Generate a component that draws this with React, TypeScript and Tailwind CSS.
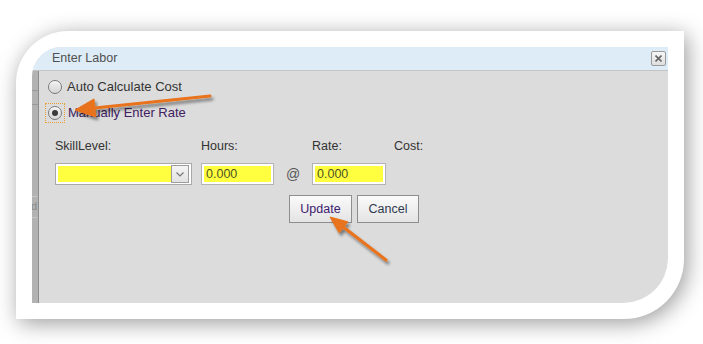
import React from "react";

const font = { fontFamily: '"Liberation Sans", Arial, sans-serif' };

function Radio({ checked }: { checked?: boolean }) {
  return (
    <div className="w-[14px] h-[14px] rounded-full border border-[#7a7a7a] bg-gradient-to-b from-[#f2f2f2] to-[#d6d6d6] flex items-center justify-center shadow-[inset_0_1px_1px_rgba(255,255,255,0.8)]">
      {checked && <div className="w-[6px] h-[6px] rounded-full bg-[#3a3a3a]" />}
    </div>
  );
}

function YellowInput({ value, w }: { value: string; w: string }) {
  return (
    <div className={`${w} h-[22px] border border-[#b3b3b3] bg-white p-[2px]`}>
      <div className="h-full bg-[#ffff40] flex items-center pl-[2px] text-[12.5px] text-[#4c5220]">{value}</div>
    </div>
  );
}

export default function App() {
  return (
    <div className="w-[703px] h-[344px] bg-white overflow-hidden pt-[31px] pl-[16px]" style={font}>
      <div className="w-[668px] h-[288px] bg-white rounded-tl-[52px] rounded-br-[60px] shadow-[3px_4px_22px_rgba(0,0,0,0.4)] p-[16px] relative">
        <div className="w-full h-full rounded-tl-[30px] rounded-br-[45px] overflow-hidden bg-[#dcdcdc] flex flex-col">
          {/* title bar */}
          <div className="h-[24px] bg-[#deecf7] border-b border-[#c4c4c4] flex items-center justify-between pl-[20px] pr-[2px] shrink-0">
            <span className="text-[12.5px] text-[#505050]">Enter Labor</span>
            <div className="w-[15px] h-[15px] border border-[#9a9a9a] rounded-[2px] bg-gradient-to-b from-[#f6f6f6] to-[#dedede] flex items-center justify-center">
              <svg width="7" height="7" viewBox="0 0 7 7">
                <path d="M0.5 0.5 L6.5 6.5 M6.5 0.5 L0.5 6.5" stroke="#666" strokeWidth="1.6" />
              </svg>
            </div>
          </div>
          <div className="flex flex-1">
            {/* left page strip */}
            <div className="w-[7px] bg-[#b2b2b2] border-r border-[#8c8c8c] relative shrink-0">
              <div className="absolute left-0 right-0 top-[19px] h-px bg-[#9a9a9a]" />
              <div className="absolute left-0 right-0 top-[33px] h-px bg-[#9a9a9a]" />
              <div className="absolute left-0 right-0 top-[125px] h-px bg-[#c4c4c4]" />
              <div className="absolute left-0 right-0 top-[146px] h-px bg-[#c4c4c4]" />
              <span className="absolute left-[-1px] top-[128px] text-[11px] text-[#8a8a8a] leading-[14px]">d</span>
            </div>
            {/* content */}
            <div className="flex-1 flex flex-col pt-[8px]">
              <div className="flex items-center h-[16px] pl-[9px]">
                <Radio />
                <span className="ml-[5px] text-[13px] text-[#333]">Auto Calculate Cost</span>
              </div>
              <div className="flex items-center h-[16px] mt-[10px] pl-[6px]">
                <div className="p-[2px] border border-dotted border-[#e8a030]">
                  <Radio checked />
                </div>
                <span className="ml-[3px] text-[13px] text-[#40215e]">Manually Enter Rate</span>
              </div>
              <div className="flex mt-[18px] pl-[16px] text-[12.5px] text-[#333] leading-[14px]">
                <span className="w-[146px]">SkillLevel:</span>
                <span className="w-[111px]">Hours:</span>
                <span className="w-[82px]">Rate:</span>
                <span>Cost:</span>
              </div>
              <div className="flex items-center mt-[10px] pl-[16px]">
                <div className="w-[137px] h-[22px] border border-[#a9a9a9] bg-white p-[2px] flex">
                  <div className="flex-1 bg-[#ffff40]" />
                  <div className="w-[18px] -my-[1px] border border-[#9c9c9c] bg-gradient-to-b from-[#f4f4f4] to-[#e2e2e2] flex items-center justify-center">
                    <svg width="8" height="5" viewBox="0 0 8 5">
                      <path d="M0.5 0.5 L4 4 L7.5 0.5" stroke="#777" strokeWidth="1.2" fill="none" />
                    </svg>
                  </div>
                </div>
                <div className="w-[9px]" />
                <YellowInput value="0.000" w="w-[73px]" />
                <div className="w-[38px] flex justify-center text-[14px] text-[#555]">@</div>
                <YellowInput value="0.000" w="w-[74px]" />
              </div>
              <div className="flex mt-[10px] pl-[250px] gap-[5px]">
                <button className="w-[63px] h-[28px] border border-[#8e8e8e] bg-gradient-to-b from-[#fafafa] to-[#e4e4e4] text-[12.5px] text-[#3d2070]">Update</button>
                <button className="w-[62px] h-[28px] border border-[#8e8e8e] bg-gradient-to-b from-[#fafafa] to-[#e4e4e4] text-[12.5px] text-[#2e3a4e]">Cancel</button>
              </div>
            </div>
          </div>
        </div>
      </div>
      {/* arrows overlay */}
      <svg className="absolute left-0 top-0 pointer-events-none" width="703" height="344" viewBox="0 0 703 344">
        <defs>
          <filter id="sh" x="-20%" y="-50%" width="140%" height="200%">
            <feDropShadow dx="2" dy="3" stdDeviation="1.8" floodColor="#000" floodOpacity="0.45" />
          </filter>
        </defs>
        <g filter="url(#sh)" fill="#e8731c" stroke="#e8731c">
          <path d="M210 96 L92 108.2" strokeWidth="3" strokeLinecap="round" fill="none" />
          <polygon points="75,110 94,98.9 95.8,116.9" strokeWidth="1" strokeLinejoin="round" />
          <path d="M386 260 L342 226" strokeWidth="3" strokeLinecap="round" fill="none" />
          <polygon points="330,217 347.8,221.8 339.2,232.9" strokeWidth="1" strokeLinejoin="round" />
        </g>
      </svg>
    </div>
  );
}
